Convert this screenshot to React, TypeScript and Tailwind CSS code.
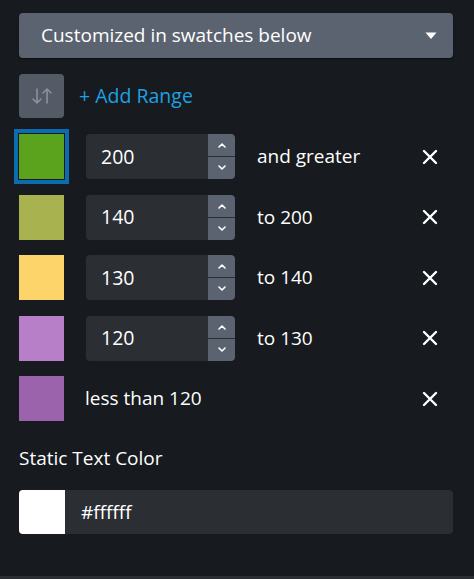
import React from "react";

const font = { fontFamily: "'Open Sans', Lato, sans-serif" };

function Stepper() {
  return (
    <div className="flex flex-col w-[27px] h-full gap-[1px] bg-[#2b2e33]">
      <div className="flex-1 bg-[#5c6370] rounded-tr-[4px] flex items-center justify-center">
        <svg width="10" height="6" viewBox="0 0 10 6">
          <path d="M2 5 L5 2 L8 5" stroke="white" strokeWidth="1.6" fill="none" strokeLinecap="round" strokeLinejoin="round" />
        </svg>
      </div>
      <div className="flex-1 bg-[#5c6370] rounded-br-[4px] flex items-center justify-center">
        <svg width="10" height="6" viewBox="0 0 10 6">
          <path d="M2 1 L5 4 L8 1" stroke="white" strokeWidth="1.6" fill="none" strokeLinecap="round" strokeLinejoin="round" />
        </svg>
      </div>
    </div>
  );
}

function CloseX() {
  return (
    <svg width="16" height="16" viewBox="0 0 16 16">
      <path d="M2 2 L14 14 M14 2 L2 14" stroke="white" strokeWidth="2.4" strokeLinecap="round" />
    </svg>
  );
}

function Row({ color, value, label, focused }: { color: string; value?: string; label: string; focused?: boolean }) {
  return (
    <div className="flex items-center h-[45px]">
      <div
        className={
          "w-[45px] h-[45px] shrink-0 " +
          (focused ? "ring-[4px] ring-[#0b6db0] ring-offset-1 ring-offset-[#0f1a24]" : "")
        }
        style={{ backgroundColor: color }}
      />
      {value !== undefined ? (
        <>
          <div className="ml-[22px] flex h-[45px] w-[149px] rounded-[4px] bg-[#2b2e33] overflow-hidden">
            <div className="flex-1 flex items-center pl-[15px] text-[19.5px] text-white">{value}</div>
            <Stepper />
          </div>
          <div className="ml-[22px] text-[19px] text-white">{label}</div>
        </>
      ) : (
        <div className="ml-[21px] text-[19px] text-white">{label}</div>
      )}
      <div className="ml-auto mr-[15px] flex items-center">
        <CloseX />
      </div>
    </div>
  );
}

export default function App() {
  return (
    <div className="w-[474px] h-[579px] bg-[#171a1e] flex flex-col" style={font}>
      <div className="flex-1 flex flex-col pl-[19px] pr-[21px] pt-[13px]">
        <div className="h-[45px] rounded-[4px] bg-[#5c6370] flex items-center pl-[22px] pr-[16px] shadow-[0_1px_2px_rgba(0,0,0,0.5)]">
          <span className="text-[19px] text-white">Customized in swatches below</span>
          <svg className="ml-auto" width="12" height="8" viewBox="0 0 12 8">
            <path d="M0.5 0.5 L11.5 0.5 L6 7 Z" fill="white" />
          </svg>
        </div>
        <div className="mt-[16px] flex items-center h-[44px]">
          <div className="w-[45px] h-[44px] rounded-[4px] bg-[#555b66] flex items-center justify-center">
            <svg width="22" height="18" viewBox="0 0 22 18">
              <g stroke="#8c929b" strokeWidth="1.6" fill="none" strokeLinecap="round" strokeLinejoin="round">
                <path d="M6 2 V16 M2 12 L6 16 L10 12" />
                <path d="M16 16 V2 M12 6 L16 2 L20 6" />
              </g>
            </svg>
          </div>
          <span className="ml-[15px] text-[19.5px] text-[#1fa1e3]">+ Add Range</span>
        </div>
        <div className="mt-[16px] flex flex-col gap-[15.5px]">
          <Row color="#5ba31d" value="200" label="and greater" focused />
          <Row color="#a8b24f" value="140" label="to 200" />
          <Row color="#fcd46a" value="130" label="to 140" />
          <Row color="#b77fc8" value="120" label="to 130" />
          <Row color="#9a63ac" label="less than 120" />
        </div>
        <div className="mt-[26px] text-[19px] text-white leading-[22px]">Static Text Color</div>
        <div className="mt-[21px] flex h-[44px] rounded-[4px] overflow-hidden bg-[#2b2e33]">
          <div className="w-[46px] h-full bg-white" />
          <div className="flex items-center pl-[16px] text-[19px] text-white">#ffffff</div>
        </div>
      </div>
      <div className="h-[3px] bg-[#2b2e33]" />
    </div>
  );
}
